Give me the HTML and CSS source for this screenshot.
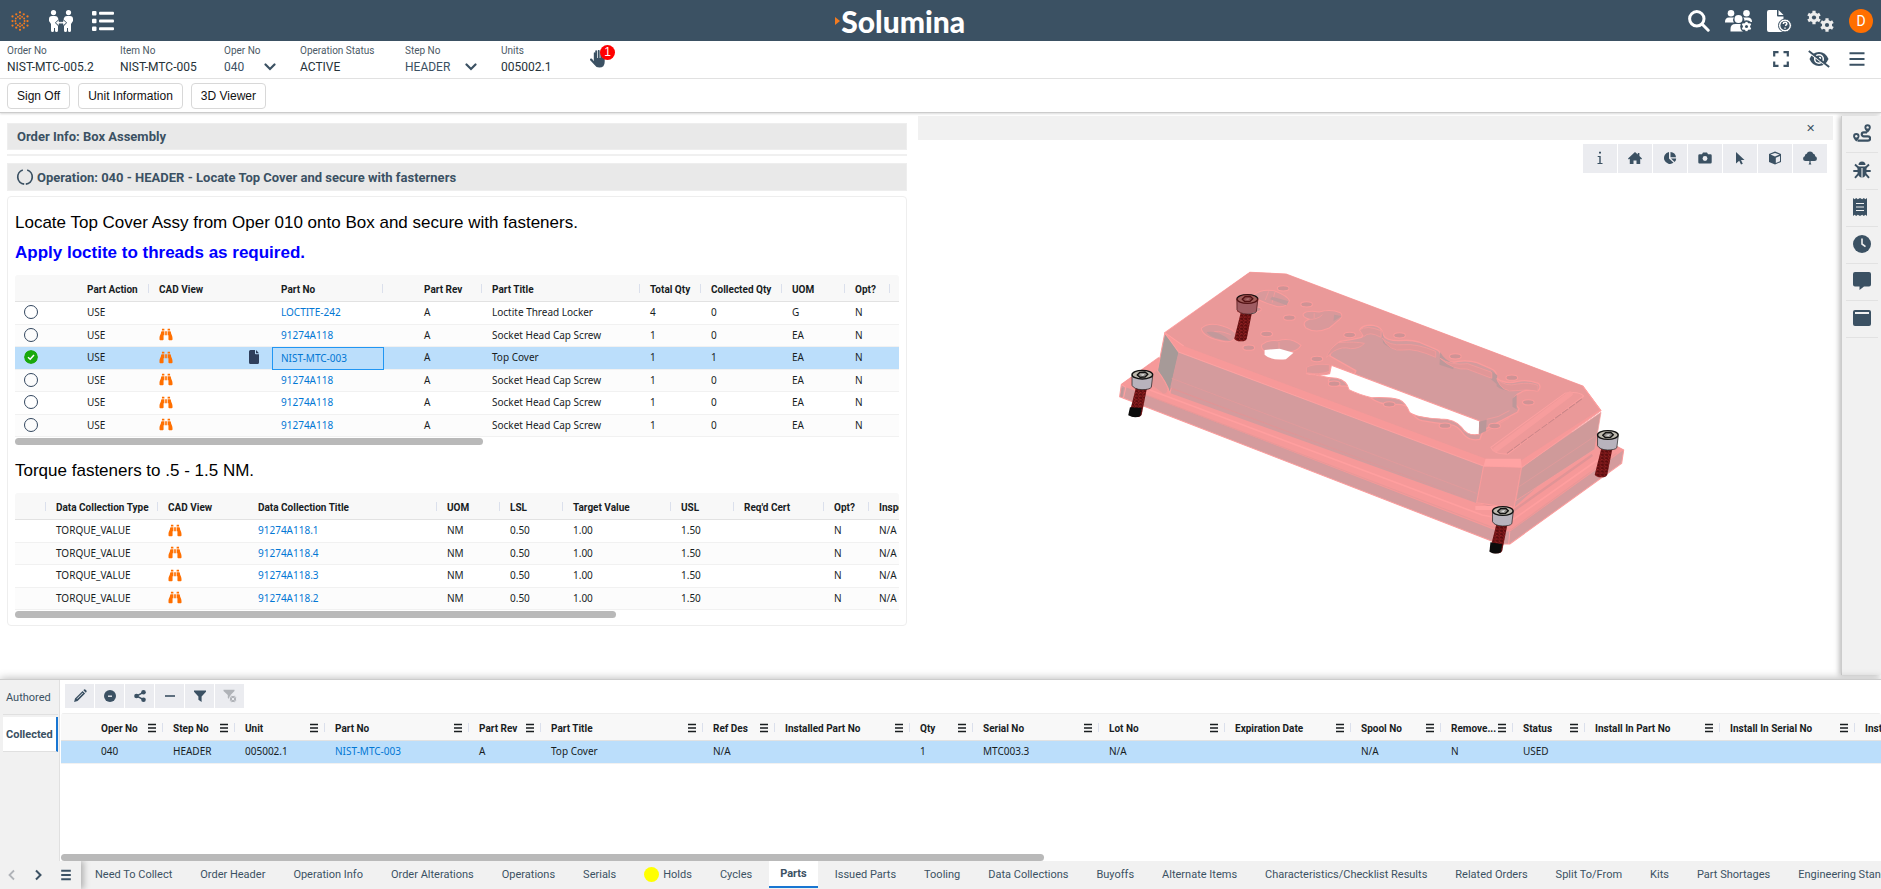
FILE: index.html
```html
<!DOCTYPE html>
<html lang="en">
    <head>
        <meta charset="utf-8">
        <title>Solumina</title>

        <link rel="stylesheet" href="styles.css">
    </head>
    <body>
        <!-- icon sprite -->
        <svg class="sprite" aria-hidden="true">
            <symbol id="i-hex" viewBox="0 0 24 24">
                <g fill="none" stroke="currentColor" stroke-linecap="round" stroke-width="2.700">
                    <path d="M12 1.500v.01M12 22.500v.01M3 6.500v.01M21 6.500v.01M3 17.500v.01M21 17.500v.01M7.500 4v.01M16.500 4v.01M7.500 20v.01M16.500 20v.01M3 12v.01M21 12v.01"/>
                    <path stroke-width="2.300" d="M12 5.500v.01M12 18.500v.01M7 9v.01M17 9v.01M7 15v.01M17 15v.01M9.500 7v.01M14.500 7v.01M9.500 17v.01M14.500 17v.01M6.500 12v.01M17.500 12v.01M12 9v.01M12 15v.01"/>
                </g>
            </symbol>
            <symbol id="i-people" viewBox="0 0 24 22">
                <circle cx="4.500" cy="2.600" r="2.600"/><circle cx="19.500" cy="2.600" r="2.600"/>
                <path d="M3 6h3q2.500 0 3 2l.5 1.500L6 12.700 9 16v4.500a1.500 1.500 0 0 1-3 0V18H5v2.500a1.500 1.500 0 0 1-3 0V14L0 11V9q0-3 3-3zM21 6h-3q-2.500 0-3 2l-.5 1.500 3.500 3.200-3 3.300v4.500a1.500 1.500 0 0 0 3 0V18h1v2.500a1.500 1.500 0 0 0 3 0V14l2-3V9q0-3-3-3z"/>
                <path d="M6.500 12.700l3.500-3v2h4v-2l3.500 3-3.500 3v-2h-4v2z" stroke="#3b5163" stroke-width=".5"/>
            </symbol>
            <symbol id="i-list" viewBox="0 0 22 20">
                <rect width="4.500" height="4.500" rx="1" y="0"/><rect width="4.500" height="4.500" rx="1" y="7.800"/><rect width="4.500" height="4.500" rx="1" y="15.500"/>
                <rect x="7" y=".7" width="15" height="3" rx="1"/><rect x="7" y="8.500" width="15" height="3" rx="1"/><rect x="7" y="16.200" width="15" height="3" rx="1"/>
            </symbol>
            <symbol id="i-search" viewBox="0 0 22 22">
                <g fill="none" stroke="currentColor" stroke-linecap="round" stroke-width="3"><circle cx="8.800" cy="8.800" r="7.200"/><path d="M14.500 14.500l5.700 5.700"/></g>
            </symbol>
            <symbol id="i-gear" viewBox="0 0 14 14">
                <circle cx="7" cy="7" r="3.500" fill="none" stroke="currentColor" stroke-width="3.200"/>
                <path d="M7 .2v13.600M1.100 3.600l11.800 6.800M1.100 10.400l11.800-6.800" stroke="currentColor" stroke-width="3.200"/>
                <circle class="hole" cx="7" cy="7" r="2.100"/>
            </symbol>
            <symbol id="i-users" viewBox="0 0 27 22">
                <circle cx="6" cy="3.300" r="3.300"/><circle cx="21.500" cy="3.300" r="3.300"/>
                <path d="M0 12q0-4.500 4-4.500h5Q7 10 9 12.500H0zM27 12q0-4.500-4-4.500h-5q2 1 1 5z"/>
                <circle cx="13.500" cy="9" r="4"/><path d="M5.500 21.500V19q0-5 5-5h7l1 7.500z"/>
                <circle class="cut" cx="21.500" cy="16.500" r="6.300"/>
                <use href="#i-gear" x="16.500" y="11.500" width="10" height="10"/>
            </symbol>
            <symbol id="i-filehelp" viewBox="0 0 25 22">
                <path d="M2 0h8v5.500q0 1 1 1h5.500V22H2q-2 0-2-2V2q0-2 2-2z"/><path d="M11.500 0l5 5h-5z"/>
                <circle cx="18" cy="15.500" r="6.500" stroke="#3b5163"/><circle cx="18" cy="15.500" r="4.600" class="cut"/>
                <path d="M16.200 14q.2-1.700 1.900-1.700t1.800 1.500q0 1-1.800 1.900M18 17.500v1.200" fill="none" stroke="currentColor" stroke-width="1.500"/>
            </symbol>
            <symbol id="i-hand" viewBox="0 0 17 20">
                <path d="M6 1.200a1 1 0 0 1 2 0V9h.8V1a1 1 0 0 1 2.100 0v8h.8V2.500a1 1 0 0 1 2 0V9h.8V5a1 1 0 0 1 2 0v8q0 6.500-6 6.500-3.500 0-5.200-2.800L.4 11.500q-.8-1.800 1-2 1 0 1.600 1l1.400 2V3a1 1 0 0 1 1.600 0z"/>
            </symbol>
            <symbol id="i-down" viewBox="0 0 12 8"><path d="M1.500 1.500L6 6l4.500-4.500" fill="none" stroke="currentColor" stroke-width="2.200" stroke-linecap="round"/></symbol>
            <symbol id="i-left" viewBox="0 0 8 12"><path d="M6 1.500L1.500 6 6 10.500" fill="none" stroke="currentColor" stroke-width="1.800"/></symbol>
            <symbol id="i-right" viewBox="0 0 8 12"><path d="M2 1.500L6.500 6 2 10.500" fill="none" stroke="currentColor" stroke-width="2"/></symbol>
            <symbol id="i-full" viewBox="0 0 16 16"><path d="M1.200 5.500V1.200h4.300M10.500 1.200h4.300v4.300M14.800 10.500v4.300h-4.300M5.500 14.800H1.200v-4.300" fill="none" stroke="currentColor" stroke-width="2.200"/></symbol>
            <symbol id="i-eye" viewBox="0 0 22 18">
                <path d="M11 2q6.500 0 9.500 7-3 7-9.500 7T1.500 9Q4.500 2 11 2z"/>
                <circle cx="11" cy="9" r="4.300" fill="none" stroke="#fff" stroke-width="1.500"/><circle cx="12" cy="8" r="1.200" fill="#fff"/>
                <path d="M1 2.500l19 14.500" stroke="#fff" stroke-width="1.600"/><path d="M.8 1l20.400 16" stroke="currentColor" stroke-width="1.900"/>
            </symbol>
            <symbol id="i-bars" viewBox="0 0 16 14"><path d="M.5 1.200h15M.5 7h15M.5 12.800h15" stroke="currentColor" stroke-width="1.900"/></symbol>
            <symbol id="i-menu" viewBox="0 0 10 10"><path d="M1 1.500h8M1 5h8M1 8.500h8" stroke="currentColor" stroke-width="1.700"/></symbol>
            <symbol id="i-bino" viewBox="0 0 512 512"><path d="M416 48c0-9-7-16-16-16h-64c-9 0-16 7-16 16v48h96V48zM64 160C61 254 3 274 0 404v44c0 18 14 32 32 32h96c18 0 32-14 32-32V288h32V128H96c-18 0-32 14-32 32zm384 0c0-18-14-32-32-32h-96v160h32v160c0 18 14 32 32 32h96c18 0 32-14 32-32v-44c-3-130-61-150-64-244zM176 32h-64c-9 0-16 7-16 16v48h96V48c0-9-7-16-16-16zm48 256h64V128h-64v160z"/></symbol>
            <symbol id="i-doc" viewBox="0 0 10 14"><path d="M1.500 0H6v3.500q0 .8.800.8H10v8.200q0 1.500-1.500 1.500h-7Q0 14 0 12.500v-11Q0 0 1.500 0zM7 0l3 3.300H7z"/></symbol>
            <symbol id="i-info" viewBox="0 0 14 14"><path d="M6 .8h2v1.800H6zM4.700 5h3v7h1.800v1H4.500v-1h1.800V6H4.700z"/></symbol>
            <symbol id="i-home" viewBox="0 0 14 14"><path d="M7 1l2.800 2.500V2h1.600v3L14 7.500l-.8 1-1-.8V13H8.500V9.500h-3V13H1.800V7.700l-1 .8-.8-1z"/></symbol>
            <symbol id="i-pie" viewBox="0 0 14 14"><path d="M6 1v6.500l4.500 4.300A6 6 0 1 1 6 1zM7.500 1a5.500 5.500 0 0 1 5.500 5.300H7.500zM8 7.500h5.200a5 5 0 0 1-1.600 3.600z"/></symbol>
            <symbol id="i-camera" viewBox="0 0 14 14"><path d="M1.500 3.200H4L5 1.500h4l1 1.700h2.500q1.200 0 1.200 1.200v6.800q0 1.300-1.200 1.300h-11q-1.200 0-1.200-1.300V4.400q0-1.200 1.200-1.200z"/><circle cx="7" cy="7.500" r="2.400" fill="#ebecf0"/></symbol>
            <symbol id="i-cursor" viewBox="0 0 14 14"><path d="M3 1l8.500 8H8l1.800 3.700-1.800.8L6.200 9.800 3 12.500z"/></symbol>
            <symbol id="i-cube" viewBox="0 0 14 14"><path d="M7 .6l6 2.300v8L7 13.500 1 10.900v-8z"/><path d="M2.500 3.600L7 5.400l4.500-1.800L7 2z" fill="#ebecf0"/><path d="M7.800 6.800L12 5v5.200l-4.200 1.900z" fill="#ebecf0"/></symbol>
            <symbol id="i-tree" viewBox="0 0 14 14"><path d="M7 .5q2.600 0 3.300 2.300 2 .4 1.900 2.400 1.700.5 1.700 2.300 0 2.500-2.500 2.500H7.600v1.700l.8 1.800H5.600l.8-1.800V10H2.600Q.1 10 .1 7.500q0-1.800 1.700-2.300-.1-2 1.900-2.400Q4.400.5 7 .5z"/></symbol>
            <symbol id="i-route" viewBox="0 0 18 18">
                <path d="M3.300 9a3.200 3.200 0 0 1 3.200 3.200Q6.500 14 3.300 17.500.1 14 .1 12.200A3.200 3.200 0 0 1 3.300 9zM14.600.2a3.200 3.200 0 0 1 3.200 3.200q0 1.800-3.200 5.300-3.200-3.500-3.200-5.300A3.200 3.200 0 0 1 14.600.2z"/>
                <circle cx="3.300" cy="12.200" r="1.200" fill="#f1f1f1"/><circle cx="14.600" cy="3.400" r="1.200" fill="#f1f1f1"/>
                <path d="M14 8.300h-3.200a2 2 0 0 0 0 4.100H15a2.100 2.100 0 0 1 0 4.200H4.500" fill="none" stroke="currentColor" stroke-width="2.200"/>
            </symbol>
            <symbol id="i-bug" viewBox="0 0 18 18">
                <path d="M5.500 4a3.500 3.500 0 0 1 7 0zM4.500 5.500h9V11a4.500 5.500 0 0 1-9 0z"/>
                <path d="M.3 10h17.400M2 3.500l4 3.700M16 3.500l-4 3.700M2 16.800l3.500-4M16 16.800l-3.500-4" stroke="currentColor" stroke-width="1.900"/>
                <path d="M9 7v9.500" stroke="#f1f1f1" stroke-width="1.100"/>
            </symbol>
            <symbol id="i-receipt" viewBox="0 0 14 18"><path d="M0 0l1.600 1.200L3.200 0l1.600 1.200L7 0l2.200 1.200L10.800 0l1.600 1.200L14 0v18l-1.600-1.200-1.600 1.200-1.600-1.200L7 18l-2.200-1.200L3.200 18l-1.600-1.200L0 18z"/><path d="M3 5.500h8M3 9h8M3 12.500h8" stroke="#f1f1f1"/></symbol>
            <symbol id="i-clock" viewBox="0 0 18 18"><circle cx="9" cy="9" r="9"/><path d="M9 3.500V9l3.500 2.600" fill="none" stroke="#f1f1f1" stroke-width="1.600"/></symbol>
            <symbol id="i-chat" viewBox="0 0 18 18"><path d="M2 0h14q2 0 2 2v10.500q0 2-2 2h-5L6.500 18v-3.500H2q-2 0-2-2V2q0-2 2-2z"/></symbol>
            <symbol id="i-window" viewBox="0 0 18 18"><rect y="1" width="18" height="16" rx="2"/><path d="M2 4h14" stroke="#f1f1f1" stroke-width="2"/></symbol>
            <symbol id="i-pencil" viewBox="0 0 14 14"><path d="M9.600 1.900l2.500 2.500-7.500 7.600-3.500.9.900-3.500zM10.400 1.200l.6-.6q.8-.6 1.600.1l.8.8q.6.800 0 1.500l-.6.700z"/><path d="M4 9.800l5.800-5.800" stroke="#ebecf0" stroke-width=".9"/></symbol>
            <symbol id="i-minuscircle" viewBox="0 0 14 14"><circle cx="7" cy="7" r="6"/><path d="M5 7.200h4" stroke="#ebecf0" stroke-width="1.400"/></symbol>
            <symbol id="i-share" viewBox="0 0 14 14"><circle cx="3.500" cy="7" r="2.300"/><circle cx="10.500" cy="3.300" r="2.300"/><circle cx="10.500" cy="10.700" r="2.300"/><path d="M10.500 3.300L3.500 7l7 3.700" fill="none" stroke="currentColor" stroke-width="1.500"/></symbol>
            <symbol id="i-minus" viewBox="0 0 14 14"><path d="M2 7h10" stroke="currentColor" stroke-width="1.600"/></symbol>
            <symbol id="i-filter" viewBox="0 0 14 14"><path d="M1 1.500h12v1.200L8.600 7.500V13L5.400 10.700V7.500L1 2.700z"/></symbol>
            <symbol id="i-nofilter" viewBox="0 0 14 14"><path d="M.5.700h11v1.200L7.600 6V11L4.800 9V6L.5 1.900z"/><circle cx="10" cy="10" r="3.700" stroke="#ebecf0"/><path d="M8.700 8.700l2.600 2.600M11.300 8.700l-2.600 2.600" stroke="#ebecf0"/></symbol>
            <symbol id="i-progress" viewBox="0 0 18 18"><path d="M11.200 2a7.300 7.300 0 0 1-1.400 14.200M8.200 16.200A7.300 7.300 0 0 1 6.800 2" fill="none" stroke="currentColor" stroke-width="1.700"/></symbol>
        </svg>

        <header class="topbar">
            <nav class="topbar-side">
                <a href="#" class="brand-mark" aria-label="Home"><svg width="20" height="22"><use href="#i-hex"/></svg></a>
                <a href="#" aria-label="Work"><svg width="24" height="22"><use href="#i-people"/></svg></a>
                <a href="#" aria-label="Lists"><svg width="22" height="20"><use href="#i-list"/></svg></a>
            </nav>
            <div class="logo"><span class="logo-arrow"></span>Solumina</div>
            <nav class="topbar-side topbar-right">
                <a href="#" aria-label="Search"><svg width="22" height="22"><use href="#i-search"/></svg></a>
                <a href="#" aria-label="Users"><svg width="27" height="22"><use href="#i-users"/></svg></a>
                <a href="#" aria-label="Help"><svg width="25" height="22"><use href="#i-filehelp"/></svg></a>
                <a href="#" aria-label="Settings" class="gears"><svg width="27" height="22"><use href="#i-gear" width="14" height="15"/><use href="#i-gear" x="13" y="8" width="14" height="14"/></svg></a>
                <a href="#" class="avatar">D</a>
            </nav>
        </header>

        <div class="order-bar">
            <div class="fields">
                <div><span class="label">Order No</span><span class="value">NIST-MTC-005.2</span></div>
                <div><span class="label">Item No</span><span class="value">NIST-MTC-005</span></div>
                <div class="pick oper">
                    <label for="oper" class="label">Oper No</label>
                    <select id="oper"><option>040</option></select>
                    <svg width="12" height="8"><use href="#i-down"/></svg>
                </div>
                <div><span class="label">Operation Status</span><span class="value">ACTIVE</span></div>
                <div class="pick step">
                    <label for="step" class="label">Step No</label>
                    <select id="step"><option>HEADER</option></select>
                    <svg width="12" height="8"><use href="#i-down"/></svg>
                </div>
                <div><span class="label">Units</span><span class="value">005002.1</span></div>
                <button class="hold" aria-label="Holds"><svg width="17" height="18"><use href="#i-hand"/></svg><span class="badge">1</span></button>
            </div>
            <div class="order-tools">
                <button aria-label="Full screen"><svg width="16" height="16"><use href="#i-full"/></svg></button>
                <button aria-label="Hide"><svg width="22" height="18"><use href="#i-eye"/></svg></button>
                <button aria-label="Menu"><svg width="16" height="14"><use href="#i-bars"/></svg></button>
            </div>
        </div>

        <div class="actions">
            <button>Sign Off</button>
            <button>Unit Information</button>
            <button>3D Viewer</button>
        </div>

        <main>
            <section class="instructions">
                <h2 class="bar">Order Info: Box Assembly</h2>
                <hr>
                <h2 class="bar oper-title"><svg width="18" height="18"><use href="#i-progress"/></svg>Operation: 040 - HEADER - Locate Top Cover and secure with fasterners</h2>
                <div class="text-block">
                    <p>Locate Top Cover Assy from Oper 010 onto Box and secure with fasteners.</p>
                    <p class="warn">Apply loctite to threads as required.</p>
                    <div class="grid">
                        <table class="parts">
                            <colgroup><col><col><col><col><col><col><col><col><col><col><col><col><col></colgroup>
                            <thead>
                                <tr><th class="bare"></th><th>Part Action</th><th class="bare">CAD View</th><th class="bare"></th><th>Part No</th><th class="bare"></th><th>Part Rev</th><th>Part Title</th><th>Total Qty</th><th>Collected Qty</th><th>UOM</th><th>Opt?</th><th class="bare"></th></tr>
                            </thead>
                            <tbody>
                                <tr><td><span class="ring"></span></td><td>USE</td><td></td><td></td><td><a href="#">LOCTITE-242</a></td><td></td><td>A</td><td>Loctite Thread Locker</td><td>4</td><td>0</td><td>G</td><td>N</td><td></td></tr>
                                <tr><td><span class="ring"></span></td><td>USE</td><td><svg class="bino"><use href="#i-bino"/></svg></td><td></td><td><a href="#">91274A118</a></td><td></td><td>A</td><td>Socket Head Cap Screw</td><td>1</td><td>0</td><td>EA</td><td>N</td><td></td></tr>
                                <tr class="selected"><td><svg class="done" viewBox="0 0 14 14"><circle cx="7" cy="7" r="7" fill="#1aa80c"/><path d="M4 7.200l2.200 2L10 5" fill="none" stroke="#fff" stroke-width="1.500"/></svg></td><td>USE</td><td><svg class="bino"><use href="#i-bino"/></svg></td><td><svg class="doc" width="10" height="14"><use href="#i-doc"/></svg></td><td class="focus"><a href="#">NIST-MTC-003</a></td><td></td><td>A</td><td>Top Cover</td><td>1</td><td>1</td><td>EA</td><td>N</td><td></td></tr>
                                <tr><td><span class="ring"></span></td><td>USE</td><td><svg class="bino"><use href="#i-bino"/></svg></td><td></td><td><a href="#">91274A118</a></td><td></td><td>A</td><td>Socket Head Cap Screw</td><td>1</td><td>0</td><td>EA</td><td>N</td><td></td></tr>
                                <tr><td><span class="ring"></span></td><td>USE</td><td><svg class="bino"><use href="#i-bino"/></svg></td><td></td><td><a href="#">91274A118</a></td><td></td><td>A</td><td>Socket Head Cap Screw</td><td>1</td><td>0</td><td>EA</td><td>N</td><td></td></tr>
                                <tr><td><span class="ring"></span></td><td>USE</td><td><svg class="bino"><use href="#i-bino"/></svg></td><td></td><td><a href="#">91274A118</a></td><td></td><td>A</td><td>Socket Head Cap Screw</td><td>1</td><td>0</td><td>EA</td><td>N</td><td></td></tr>
                            </tbody>
                        </table>
                    </div>
                    <div class="scroll"><div style="width: 53%"></div></div>

                    <p class="torque">Torque fasteners to .5 - 1.5 NM.</p>
                    <div class="grid">
                        <table class="torques">
                            <colgroup><col><col><col><col><col><col><col><col><col><col><col></colgroup>
                            <thead>
                                <tr><th></th><th>Data Collection Type</th><th class="bare">CAD View</th><th>Data Collection Title</th><th>UOM</th><th>LSL</th><th>Target Value</th><th>USL</th><th>Req'd Cert</th><th>Opt?</th><th class="bare">Inspection</th></tr>
                            </thead>
                            <tbody>
                                <tr><td></td><td>TORQUE_VALUE</td><td><svg class="bino"><use href="#i-bino"/></svg></td><td><a href="#">91274A118.1</a></td><td>NM</td><td>0.50</td><td>1.00</td><td>1.50</td><td></td><td>N</td><td>N/A</td></tr>
                                <tr><td></td><td>TORQUE_VALUE</td><td><svg class="bino"><use href="#i-bino"/></svg></td><td><a href="#">91274A118.4</a></td><td>NM</td><td>0.50</td><td>1.00</td><td>1.50</td><td></td><td>N</td><td>N/A</td></tr>
                                <tr><td></td><td>TORQUE_VALUE</td><td><svg class="bino"><use href="#i-bino"/></svg></td><td><a href="#">91274A118.3</a></td><td>NM</td><td>0.50</td><td>1.00</td><td>1.50</td><td></td><td>N</td><td>N/A</td></tr>
                                <tr><td></td><td>TORQUE_VALUE</td><td><svg class="bino"><use href="#i-bino"/></svg></td><td><a href="#">91274A118.2</a></td><td>NM</td><td>0.50</td><td>1.00</td><td>1.50</td><td></td><td>N</td><td>N/A</td></tr>
                            </tbody>
                        </table>
                    </div>
                    <div class="scroll"><div style="width: 68%"></div></div>
                </div>
            </section>

            <section class="viewer">
                <div class="viewer-head"><button aria-label="Close">&#x2715;</button></div>
                <div class="viewer-tools">
                    <button aria-label="Info"><svg><use href="#i-info"/></svg></button>
                    <button aria-label="Home"><svg><use href="#i-home"/></svg></button>
                    <button aria-label="Section"><svg><use href="#i-pie"/></svg></button>
                    <button aria-label="Snapshot"><svg><use href="#i-camera"/></svg></button>
                    <button aria-label="Select"><svg><use href="#i-cursor"/></svg></button>
                    <button aria-label="Cube"><svg><use href="#i-cube"/></svg></button>
                    <button aria-label="Tree"><svg><use href="#i-tree"/></svg></button>
                </div>
                <svg class="model" viewBox="0 0 1568 960" preserveAspectRatio="none" stroke-linejoin="round">
                    <defs>
                        <pattern id="thread" width="12" height="10" patternUnits="userSpaceOnUse">
                            <path d="M0 1l12 5M0 9l7-5" stroke="#b52c2c" stroke-width="1.600"/>
                        </pattern>
                        <g id="shaft">
                            <path d="M-18 36h32l-16 84q-4 8-18 7t-18-8z" fill="#5a0c0e"/>
                            <path d="M-18 36h32l-16 84q-4 8-18 7t-18-8z" fill="url(#thread)"/>
                        </g>
                        <g id="head">
                            <path d="M-30 0v32q6 12 29 13 22 0 27-7l4-34z" fill="#b8b3bd" stroke="#1a1a1a" stroke-width="2"/>
                            <ellipse rx="30" ry="13" fill="#bdb9ae" stroke="#111" stroke-width="4"/>
                            <path d="M-15 1l8-8 15-1 8 7-8 8-15 1z" fill="#8f8c88" stroke="#111" stroke-width="4"/>
                            <path d="M-7 0l14-3-5 7z" fill="#ddd"/>
                        </g>
                    </defs>
                    <!-- flange -->
                    <path d="M62 403L170 323 440 430 1437 555 1521 600 1515 640 1190 882 1160 882 57 440z" fill="#d49b9d" stroke="#fb9c9c" stroke-width="3"/>
                    <path d="M62 403L170 325 205 430 1095 760 1205 770 1437 558 1521 600 1190 845 1140 838 66 408z" fill="#f69999"/>
                    <path d="M160 395L1095 752 1190 790 1430 615" fill="none" stroke="#e19496" stroke-width="7"/>
                    <path d="M145 420L1110 795 1195 812 1470 612" fill="none" stroke="#ff9f9f" stroke-width="5"/>
                    <path d="M110 425L1135 830 1195 838 1500 610" fill="none" stroke="#e89898" stroke-width="3"/>
                    <path d="M62 403L75 412 68 445M1190 845l-3 37" fill="none" stroke="#ffa0a0" stroke-width="3"/>
                    <path d="M63 415l6-3-4 30-6-3z" fill="#bd999a"/>
                    <path d="M165 360q20 20 30 50 5 20-10 22L132 392z" fill="#e59999" stroke="#fb9c9c"/>
                    <!-- walls -->
                    <path d="M188 250L232 300 203 430q-8-30-36-68z" fill="#a69a98" stroke="#fb9c9c" stroke-width="3"/>
                    <path d="M228 305L1114 648 1094 755 204 412z" fill="#d49b9d"/>
                    <path d="M1114 648L1225 650 1202 775 1094 758z" fill="#e69899" stroke="#fb9c9c" stroke-width="3"/>
                    <path d="M1225 650L1455 487 1437 598 1208 752z" fill="#cf9a9a" stroke="#fb9c9c" stroke-width="2"/>
                    <path d="M1090 768h108l-10 12h-98z" fill="#ffa3a3"/>
                    <path d="M208 385l885 345M1214 712l226-155" stroke="#e69a9b" stroke-width="2" fill="none"/>
                    <!-- top face -->
                    <path d="M435 67L540 72 1402 408 1455 482 1225 652 1114 648 228 306 188 248z" fill="#f79999" stroke="#fda0a0" stroke-width="3"/>
                    <path d="M435 67L540 72 1402 408 1453 478 1222 632 1120 626 243 288 190 248z" fill="#ea9999"/>
                    <path d="M1120 626h102l3 26-111-4z" fill="#ffa3a3"/>
                    <path d="M188 248l55 40M1402 408l53 74" stroke="#ffa0a0" stroke-width="3"/>
                    <path d="M1135 592L1350 430q40-8 55 8L1185 612q-40 2-50-20z" fill="#ee9999" stroke="#fba0a0" stroke-width="3"/>
                    <path d="M1150 598L1365 432" stroke="#f79d9d" stroke-width="16" stroke-linecap="round"/>
                    <path d="M1182 610L1400 446" stroke="#c98688" stroke-width="3" stroke-dasharray="22 3"/>
                    <!-- large cut-out -->
                    <path d="M668 318q0-22 30-44 30-4 62-12 8-10-6-22 8-16 40-14 26 4 28 28 8 18 46 18 34-4 58 4l50 22q16 6 14 28 20 16 50 8 30-4 55 4l40 18q18 6 18 30 26 18 60 8 30-6 60 6 10 10 0 22-40-6-52 6-20 8-20 28l16 20-4 10-96 52q-10 14-14 30-30 6-46-14-18-28-40-30-40-4-82-12-24-6-34-34-14-18-50-14-40 0-64-20-8-24-32-34-30-2-54-2-38-4-38-18 10-18 50-10 30-4 30-18z" fill="#d49b9d" stroke="#fb9c9c" stroke-width="4"/>
                    <path d="M818 238l6 28q10 18 46 18v16q-34-4-48-22zM988 306l-2 38 40 14 4-18q-28-6-42-34zM1136 362l18 14-2 26-18-16zM1152 394q20 20 50 10v18q-36 2-50-14zM1198 446l12-12v44l-12-8z" fill="#bd989a"/>
                    <path d="M820 264q20 24 60 20 40-4 95 20v18q-60-28-94-22-40 6-61-36zM988 325q30 22 80 16l70 26v18l-72-28q-40 4-78-32zM1152 386q26 26 60 16 36-6 60 4v18q-30-8-64-2-40 8-56-36z" fill="#e19798" stroke="#fb9c9c" stroke-width="2"/>
                    <path d="M754 240q20-16 62 2v20q-34-20-50-2zM692 278q50-4 76 2-14 16-40 16-24-8-50 8l-20 18q6-24 34-44zM600 352q20-12 66-8v20q-30 12-66 4z" fill="#dc9899" stroke="#fb9c9c" stroke-width="2"/>
                    <path d="M672 346L1103 513 1101 553q-34 6-50-20-20-26-62-26-70-4-90-20-12-30-30-38-24-8-80-6-40-10-66-24-6-28-36-34-22-2-50-8-20-6-38-6 40 8 68 0z" fill="#fff" stroke="#fb9c9c" stroke-width="3"/>
                    <path d="M1101 515l22-6-2 34-20 10z" fill="#b99799"/>
                    <path d="M1123 508q34-4 66-26M1121 545l68-42" stroke="#fb9c9c" stroke-width="2" fill="none"/>
                    <!-- small cut-outs -->
                    <g fill="#d9999b" stroke="#fb9c9c" stroke-width="3">
                        <path d="M446 136q20-20 60-14 40 16 44 30-10 22-34 18-66-20-70-34z"/>
                        <path d="M590 192q10-12 46-6 34-10 62 2 10 10-2 20l-30 26q-40 18-68 0-14-18 10-26-20-6-18-16z"/>
                        <path d="M294 235q20-20 60-8 40 12 40 28-4 24-30 20-66-12-70-40z"/>
                        <path d="M470 284q20-16 46-12 40-12 68 14-10 18-34 20l-20 22q-44 0-50-22-14-12-10-22z"/>
                    </g>
                    <path d="M480 150l10-26M500 158l8-32M602 208q30 2 44-14M622 190v14M326 250q10-14 54 4M520 296V276" stroke="#fb9c9c" stroke-width="2" fill="none"/>
                    <path d="M478 300l44-4 40 12-22 20q-44 4-62-14z" fill="#fff"/>
                    <path d="M310 246q34-6 68 26-48-2-66-22zM500 140l48 14-6 12-48-18zM680 194l22 4-24 16z" fill="#c2999b"/>
                    <g fill="#cf9395" stroke="#fb9c9c" stroke-width="3">
                        <ellipse cx="532" cy="115" rx="17" ry="8"/><ellipse cx="600" cy="163" rx="17" ry="8"/><ellipse cx="550" cy="203" rx="17" ry="8"/>
                        <ellipse cx="484" cy="252" rx="17" ry="8"/><ellipse cx="432" cy="293" rx="17" ry="8"/><ellipse cx="725" cy="255" rx="17" ry="8"/>
                        <ellipse cx="870" cy="256" rx="17" ry="8"/><ellipse cx="630" cy="327" rx="17" ry="8"/><ellipse cx="1032" cy="319" rx="17" ry="8"/>
                        <ellipse cx="1196" cy="383" rx="17" ry="8"/><ellipse cx="680" cy="401" rx="17" ry="8"/><ellipse cx="1244" cy="457" rx="17" ry="8"/>
                        <ellipse cx="840" cy="463" rx="17" ry="8"/><ellipse cx="1002" cy="527" rx="17" ry="8"/><ellipse cx="1146" cy="528" rx="17" ry="8"/>
                        <ellipse cx="455" cy="178" rx="13" ry="7"/>
                    </g>
                    <!-- screws -->
                    <g transform="translate(428 147)"><use href="#shaft"/><use href="#head"/><path d="M-32 0q30-28 64 0l-6 38q-30 14-56 0z" fill="#8b1418" opacity=".55"/></g>
                    <g transform="translate(123 374)"><use href="#shaft"/><path d="M-36 98l34 2-4 24q-16 8-35-2z" fill="#0b0b0b"/><use href="#head"/></g>
                    <g transform="translate(1475 555)"><use href="#shaft"/><use href="#head"/></g>
                    <g transform="translate(1170 783)"><use href="#shaft"/><path d="M-36 94l34 6-4 24q-16 8-33-2z" fill="#0b0b0b"/><use href="#head"/></g>
                </svg>
            </section>

            <aside class="rail">
                <button aria-label="Route"><svg width="18" height="18"><use href="#i-route"/></svg></button>
                <button aria-label="Issues"><svg width="18" height="18"><use href="#i-bug"/></svg></button>
                <button aria-label="Receipt"><svg width="14" height="18"><use href="#i-receipt"/></svg></button>
                <button aria-label="History"><svg width="18" height="18"><use href="#i-clock"/></svg></button>
                <button aria-label="Comments"><svg width="18" height="18"><use href="#i-chat"/></svg></button>
                <button aria-label="Window"><svg width="18" height="18"><use href="#i-window"/></svg></button>
            </aside>
        </main>

        <section class="bottom">
            <div class="bottom-body">
                <nav class="side-tabs">
                    <a href="#">Authored</a>
                    <a href="#" class="active">Collected</a>
                </nav>
                <div class="collected">
                    <div class="grid-tools">
                        <button aria-label="Edit"><svg><use href="#i-pencil"/></svg></button>
                        <button aria-label="Exclude"><svg><use href="#i-minuscircle"/></svg></button>
                        <button aria-label="Share"><svg><use href="#i-share"/></svg></button>
                        <button aria-label="Remove"><svg><use href="#i-minus"/></svg></button>
                        <button aria-label="Filter"><svg><use href="#i-filter"/></svg></button>
                        <button aria-label="Clear filter" disabled><svg><use href="#i-nofilter"/></svg></button>
                    </div>
                    <div class="grid wide">
                        <table class="installed">
                            <colgroup><col><col><col><col><col><col><col><col><col><col><col><col><col><col><col><col><col><col><col></colgroup>
                            <thead>
                                <tr>
                                    <th class="bare"></th>
                                    <th><div>Oper No<svg><use href="#i-menu"/></svg></div></th>
                                    <th><div>Step No<svg><use href="#i-menu"/></svg></div></th>
                                    <th><div>Unit<svg><use href="#i-menu"/></svg></div></th>
                                    <th><div>Part No<svg><use href="#i-menu"/></svg></div></th>
                                    <th><div>Part Rev<svg><use href="#i-menu"/></svg></div></th>
                                    <th><div>Part Title<svg><use href="#i-menu"/></svg></div></th>
                                    <th><div>Ref Des<svg><use href="#i-menu"/></svg></div></th>
                                    <th><div>Installed Part No<svg><use href="#i-menu"/></svg></div></th>
                                    <th><div>Qty<svg><use href="#i-menu"/></svg></div></th>
                                    <th><div>Serial No<svg><use href="#i-menu"/></svg></div></th>
                                    <th><div>Lot No<svg><use href="#i-menu"/></svg></div></th>
                                    <th><div>Expiration Date<svg><use href="#i-menu"/></svg></div></th>
                                    <th><div>Spool No<svg><use href="#i-menu"/></svg></div></th>
                                    <th><div>Remove...<svg><use href="#i-menu"/></svg></div></th>
                                    <th><div>Status<svg><use href="#i-menu"/></svg></div></th>
                                    <th><div>Install In Part No<svg><use href="#i-menu"/></svg></div></th>
                                    <th><div>Install In Serial No<svg><use href="#i-menu"/></svg></div></th>
                                    <th class="bare">Install In Lot No</th>
                                </tr>
                            </thead>
                            <tbody>
                                <tr class="selected"><td></td><td>040</td><td>HEADER</td><td>005002.1</td><td><a href="#">NIST-MTC-003</a></td><td>A</td><td>Top Cover</td><td>N/A</td><td></td><td>1</td><td>MTC003.3</td><td>N/A</td><td></td><td>N/A</td><td>N</td><td>USED</td><td></td><td></td><td></td></tr>
                            </tbody>
                        </table>
                    </div>
                    <div class="scroll"><div style="width: 54%"></div></div>
                </div>
            </div>
            <nav class="tabs">
                <div class="pager">
                    <button aria-label="Previous" disabled><svg width="8" height="12"><use href="#i-left"/></svg></button>
                    <button aria-label="Next"><svg width="8" height="12"><use href="#i-right"/></svg></button>
                    <button aria-label="All tabs"><svg width="12" height="12"><use href="#i-menu"/></svg></button>
                </div>
                <a href="#">Need To Collect</a>
                <a href="#">Order Header</a>
                <a href="#">Operation Info</a>
                <a href="#">Order Alterations</a>
                <a href="#">Operations</a>
                <a href="#">Serials</a>
                <a href="#"><span class="dot"></span>Holds</a>
                <a href="#">Cycles</a>
                <a href="#" class="active">Parts</a>
                <a href="#">Issued Parts</a>
                <a href="#">Tooling</a>
                <a href="#">Data Collections</a>
                <a href="#">Buyoffs</a>
                <a href="#">Alternate Items</a>
                <a href="#">Characteristics/Checklist Results</a>
                <a href="#">Related Orders</a>
                <a href="#">Split To/From</a>
                <a href="#">Kits</a>
                <a href="#">Part Shortages</a>
                <a href="#">Engineering Standards</a>
            </nav>
        </section>
    </body>
</html>
```
FILE: styles.css
```css
* {
    box-sizing: border-box;
}

body {
    margin: 0;
    height: 100vh;
    display: flex;
    flex-direction: column;
    overflow: hidden;
    font-family: Roboto, "Noto Sans", sans-serif;
    font-size: 11px;
    color: #3b5163;
    background: #fff;
}

a {
    color: inherit;
    text-decoration: none;
}

button {
    display: flex;
    align-items: center;
    justify-content: center;
    padding: 0;
    border: none;
    background: none;
    color: inherit;
    cursor: pointer;
}

svg {
    display: block;
    flex: none;
    fill: currentColor;
}

.sprite {
    position: absolute;
    width: 0;
    height: 0;
}

/* top bar */
.topbar {
    display: flex;
    align-items: center;
    flex: none;
    height: 41px;
    padding: 0 8px 0 10px;
    background: #3b5163;
    color: #fff;
}

.topbar-side {
    display: flex;
    align-items: center;
    flex: 10 0 0;
    gap: 19px;
}

.topbar-right {
    flex-grow: 11;
    justify-content: flex-end;
    gap: 15px;
}

.brand-mark {
    color: #f47b20;
}

.gears {
    color: #ececec;
}

.hole, .cut {
    fill: #3b5163;
}

.logo {
    display: flex;
    align-items: center;
    gap: 1px;
    font: 900 30px/40px Lato, sans-serif;
}

.logo-arrow {
    border: 4px solid transparent;
    border-left: 5px solid #f47b20;
    border-right: none;
}

.avatar {
    width: 24px;
    height: 24px;
    border-radius: 50%;
    background: #ff6f00;
    font-size: 14px;
    line-height: 24px;
    text-align: center;
}

/* order header */
.order-bar {
    display: flex;
    justify-content: space-between;
    flex: none;
    height: 38px;
    padding: 0 16px 0 7px;
    border-bottom: 1px solid #e3e3e3;
}

.fields {
    display: grid;
    grid-template-columns: 113px 104px 76px 105px 96px 88px 30px;
    padding-top: 2px;
}

.label, .value {
    display: block;
    line-height: 16px;
}

.label {
    font-size: 10px;
    color: #4b5a66;
}

.value, .fields select {
    font-size: 12px;
    color: #263238;
}

.pick {
    display: grid;
    grid-template-columns: 38px 12px;
    align-items: center;
    align-content: start;
    gap: 0 2px;
}

.step {
    grid-template-columns: 58px 12px;
}

.pick .label {
    grid-column: 1 / 3;
    white-space: nowrap;
}

.fields select {
    appearance: none;
    height: 16px;
    padding: 0;
    border: none;
    background: none;
    font-family: inherit;
    color: #3b5163;
}

.hold {
    position: relative;
    width: 17px;
    height: 25px;
    align-items: flex-end;
}

.badge {
    position: absolute;
    left: 11px;
    top: 2px;
    width: 15px;
    height: 15px;
    border-radius: 50%;
    background: #f00;
    color: #fff;
    font-size: 12px;
    line-height: 15px;
}

.order-tools {
    display: flex;
    align-items: center;
    gap: 19px;
    padding-bottom: 2px;
}

.actions {
    display: flex;
    align-items: center;
    gap: 8px;
    flex: none;
    height: 34px;
    padding: 0 7px;
    border-bottom: 1px solid #ccc;
    box-shadow: 0 1px 2px rgba(0, 0, 0, 0.15);
    z-index: 1;
}

.actions button {
    height: 26px;
    padding: 0 9px;
    border: 1px solid #d8d8d8;
    border-radius: 4px;
    background: #fff;
    color: #111;
    font: 12px "Liberation Sans", Arial, sans-serif;
}

main {
    display: flex;
    flex: 1;
    min-height: 0;
}

/* work instructions */
.instructions {
    width: 48.8%;
    padding: 10px 11px 0 7px;
}

.bar {
    display: flex;
    align-items: center;
    gap: 3px;
    height: 27px;
    margin: 0;
    padding: 0 9px;
    border: 1px solid #eee;
    background: #e9e9e9;
    font-size: 13px;
    font-weight: bold;
}

.instructions hr {
    height: 2px;
    margin: 4px 0 7px;
    border: none;
    background: #f0f0f0;
}

.oper-title {
    height: 28px;
    margin-bottom: 5px;
    padding-left: 8px;
}

.text-block {
    padding: 11px 7px 7px;
    border: 1px solid #eee;
    border-radius: 4px;
}

.text-block p {
    margin: 0;
    font: 17px/30px "Liberation Sans", Arial, sans-serif;
    color: #000;
}

.text-block .warn {
    font-weight: bold;
    color: #00f;
}

.text-block .torque {
    margin-top: 11px;
}

/* data grids */
.grid {
    margin-top: 7px;
    overflow: hidden;
    border-radius: 3px 3px 0 0;
}

table {
    width: 100%;
    table-layout: fixed;
    border-collapse: separate;
    border-spacing: 0;
}

th {
    height: 27px;
    padding: 3px 0 0 9px;
    border-bottom: 1px solid #e2e2e2;
    background: linear-gradient(#dbe0ec, #dbe0ec) no-repeat right 1px top 9px / 1px 9px #f8f8f8;
    font-size: 10px;
    font-weight: bold;
    text-align: left;
    white-space: nowrap;
    color: #181d1f;
}

th.bare {
    background: #f8f8f8;
}

td {
    height: 22px;
    padding: 0 0 2px 9px;
    border-bottom: 1px solid #f1f1f1;
    font: 10px/14px "Noto Sans", sans-serif;
    white-space: nowrap;
    color: #181d1f;
}

tr:nth-child(odd) td {
    height: 23px;
}

tr:nth-child(even) td {
    background: #fcfcfc;
}

tr.selected td {
    background: #bbdefb;
}

td a {
    color: #0277d4;
}

td.focus {
    padding: 0 0 1px 8px;
    border: 1px solid #2196f3;
}

.ring, .done {
    display: block;
    width: 14px;
    height: 14px;
    border-radius: 50%;
}

.ring {
    border: 1px solid #33475f;
}

.bino {
    width: 14px;
    height: 13px;
    color: #ff6f00;
}

.doc {
    margin-left: -2px;
    color: #2f3f5c;
}

.parts col:nth-child(1) { width: 63px; }
.parts col:nth-child(2) { width: 72px; }
.parts col:nth-child(3) { width: 92px; }
.parts col:nth-child(4) { width: 30px; }
.parts col:nth-child(5) { width: 112px; }
.parts col:nth-child(6) { width: 31px; }
.parts col:nth-child(7) { width: 68px; }
.parts col:nth-child(8) { width: 158px; }
.parts col:nth-child(9) { width: 61px; }
.parts col:nth-child(10) { width: 81px; }
.parts col:nth-child(11) { width: 63px; }
.parts col:nth-child(12) { width: 45px; }

.torques col:nth-child(1) { width: 32px; }
.torques col:nth-child(2) { width: 112px; }
.torques col:nth-child(3) { width: 90px; }
.torques col:nth-child(4) { width: 189px; }
.torques col:nth-child(5) { width: 63px; }
.torques col:nth-child(6) { width: 63px; }
.torques col:nth-child(7) { width: 108px; }
.torques col:nth-child(8) { width: 63px; }
.torques col:nth-child(9) { width: 90px; }
.torques col:nth-child(10) { width: 45px; }
.torques col:nth-child(11) { width: 90px; }

.scroll {
    margin-top: 1px;
}

.scroll div {
    height: 7px;
    border-radius: 4px;
    background: #b9b9b9;
}

/* 3D viewer */
.viewer {
    display: flex;
    flex-direction: column;
    flex: 1;
    padding: 3px 8px 0 0;
}

.viewer-head {
    display: flex;
    justify-content: flex-end;
    height: 24px;
    padding-right: 18px;
    background: #f1f1f1;
}

.viewer-head button {
    font-size: 11px;
}

.viewer-tools {
    display: flex;
    justify-content: flex-end;
    gap: 1px;
    margin: 4px 6px 0 0;
}

.viewer-tools button {
    width: 34px;
    height: 29px;
    padding-bottom: 2px;
    background: #ebecf0;
}

.viewer-tools svg, .grid-tools svg {
    width: 14px;
    height: 14px;
}

.model {
    width: 59%;
    height: 320px;
    margin: 77px 0 0 182px;
}

.rail {
    width: 40px;
    margin: 3px 0 4px;
    padding: 0 3px 0 4px;
    background: #f1f1f1;
    border-left: 1px solid #ccc;
    box-shadow: -2px 0 5px rgba(0, 0, 0, 0.25);
}

.rail button {
    width: 100%;
    height: 37px;
    padding: 0 0 2px 7px;
    justify-content: flex-start;
    border-bottom: 1px solid #e2e2e2;
}

/* bottom panel */
.bottom {
    flex: none;
    background: #fff;
    border-top: 1px solid #ccc;
    box-shadow: 0 -1px 8px rgba(0, 0, 0, 0.25);
    z-index: 1;
}

.bottom-body {
    display: flex;
    height: 181px;
}

.side-tabs {
    width: 60px;
    padding-left: 3px;
    background: #f1f1f1;
    border-right: 1px solid #e0e0e0;
}

.side-tabs a {
    display: block;
    height: 35px;
    margin-right: 1px;
    padding-left: 3px;
    border-bottom: 1px solid #e0e0e0;
    line-height: 35px;
}

.side-tabs .active {
    margin-top: 2px;
    border-right: 2px solid #1976d2;
    background: #fff;
    font-weight: bold;
}

.collected {
    display: flex;
    flex-direction: column;
    flex: 1;
    min-width: 0;
    padding-left: 1px;
}

.grid-tools {
    display: flex;
    gap: 1px;
    padding: 4px 4px 5px;
}

.grid-tools button {
    width: 29px;
    height: 24px;
    background: #ebecf0;
}

.grid-tools button:disabled, .pager button:disabled {
    color: #b0b3b8;
}

.wide {
    flex: 1;
    margin-top: 0;
}

.wide th {
    height: 28px;
    border-top: 1px solid #eee;
}

.wide th div {
    display: flex;
    align-items: center;
    justify-content: space-between;
    padding-right: 7px;
}

.wide th svg {
    width: 10px;
    height: 10px;
    margin-bottom: 2px;
}

.installed col:nth-child(1) { width: 31px; }
.installed col:nth-child(2) { width: 72px; }
.installed col:nth-child(3) { width: 72px; }
.installed col:nth-child(4) { width: 90px; }
.installed col:nth-child(5) { width: 144px; }
.installed col:nth-child(6) { width: 72px; }
.installed col:nth-child(7) { width: 162px; }
.installed col:nth-child(8) { width: 72px; }
.installed col:nth-child(9) { width: 135px; }
.installed col:nth-child(10) { width: 63px; }
.installed col:nth-child(11) { width: 126px; }
.installed col:nth-child(12) { width: 126px; }
.installed col:nth-child(13) { width: 126px; }
.installed col:nth-child(14) { width: 90px; }
.installed col:nth-child(15) { width: 72px; }
.installed col:nth-child(16) { width: 72px; }
.installed col:nth-child(17) { width: 135px; }
.installed col:nth-child(18) { width: 135px; }
.installed col:nth-child(19) { width: 135px; }

.tabs {
    display: flex;
    height: 28px;
    overflow: hidden;
    background: #f1f1f1;
    white-space: nowrap;
}

.tabs a {
    display: flex;
    align-items: center;
    height: 27px;
    padding: 0 11px;
    margin-right: 6px;
}

.tabs .active {
    border-bottom: 2px solid #1976d2;
    background: #fff;
    font-weight: bold;
}

.dot {
    width: 15px;
    height: 15px;
    margin-right: 4px;
    border-radius: 50%;
    background: #ff0;
}

.pager {
    display: flex;
    align-items: center;
    flex: none;
    gap: 18px;
    width: 81px;
    margin-right: 3px;
    padding-left: 8px;
    box-shadow: 3px 0 6px rgba(0, 0, 0, 0.25);
}
```
